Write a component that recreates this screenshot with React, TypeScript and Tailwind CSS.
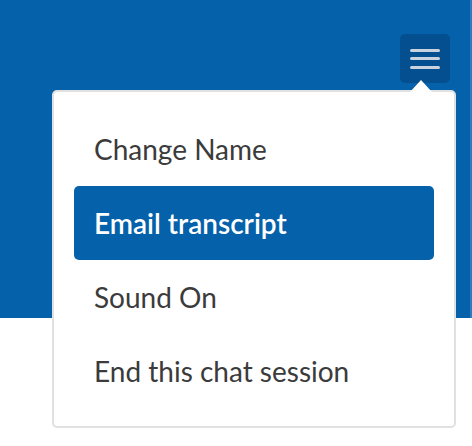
import React from "react";

export default function App() {
  const items = ["Change Name", "Email transcript", "Sound On", "End this chat session"];
  return (
    <div className="relative w-[472px] h-[446px] bg-white overflow-hidden" style={{ fontFamily: "Lato, 'Open Sans', sans-serif" }}>
      <div className="flex h-[318px]">
        <div className="flex-1 bg-[#0561a9] flex justify-end pt-[34px] pr-[20px]">
          <button className="w-[50px] h-[49px] rounded-[5px] bg-[#034f8f] flex flex-col items-center justify-center gap-[5.5px]">
            <span className="block w-[30px] h-[3px] rounded-full bg-[#c9d3df]" />
            <span className="block w-[30px] h-[3px] rounded-full bg-[#c9d3df]" />
            <span className="block w-[30px] h-[3px] rounded-full bg-[#c9d3df]" />
          </button>
        </div>
        <div className="w-[2px] bg-[#2f7bc0]" />
      </div>
      <div className="absolute left-[410px] top-[80px] w-0 h-0 border-l-[11px] border-r-[11px] border-b-[12px] border-l-transparent border-r-transparent border-b-white z-10" />
      <div className="absolute left-[52px] top-[90px] w-[404px] h-[338px] bg-white border-2 border-[#e1e1e1] rounded-[5px] px-[20px] pt-[20px]">
        {items.map((t, i) => (
          <div
            key={t}
            className={
              i === 1
                ? "h-[74px] flex items-center pl-[20px] rounded-[5px] bg-[#0561a9] text-white text-[28px] font-semibold"
                : "h-[74px] flex items-center pl-[20px] text-[#3b3b3b] text-[28px]"
            }
          >
            {t}
          </div>
        ))}
      </div>
    </div>
  );
}
